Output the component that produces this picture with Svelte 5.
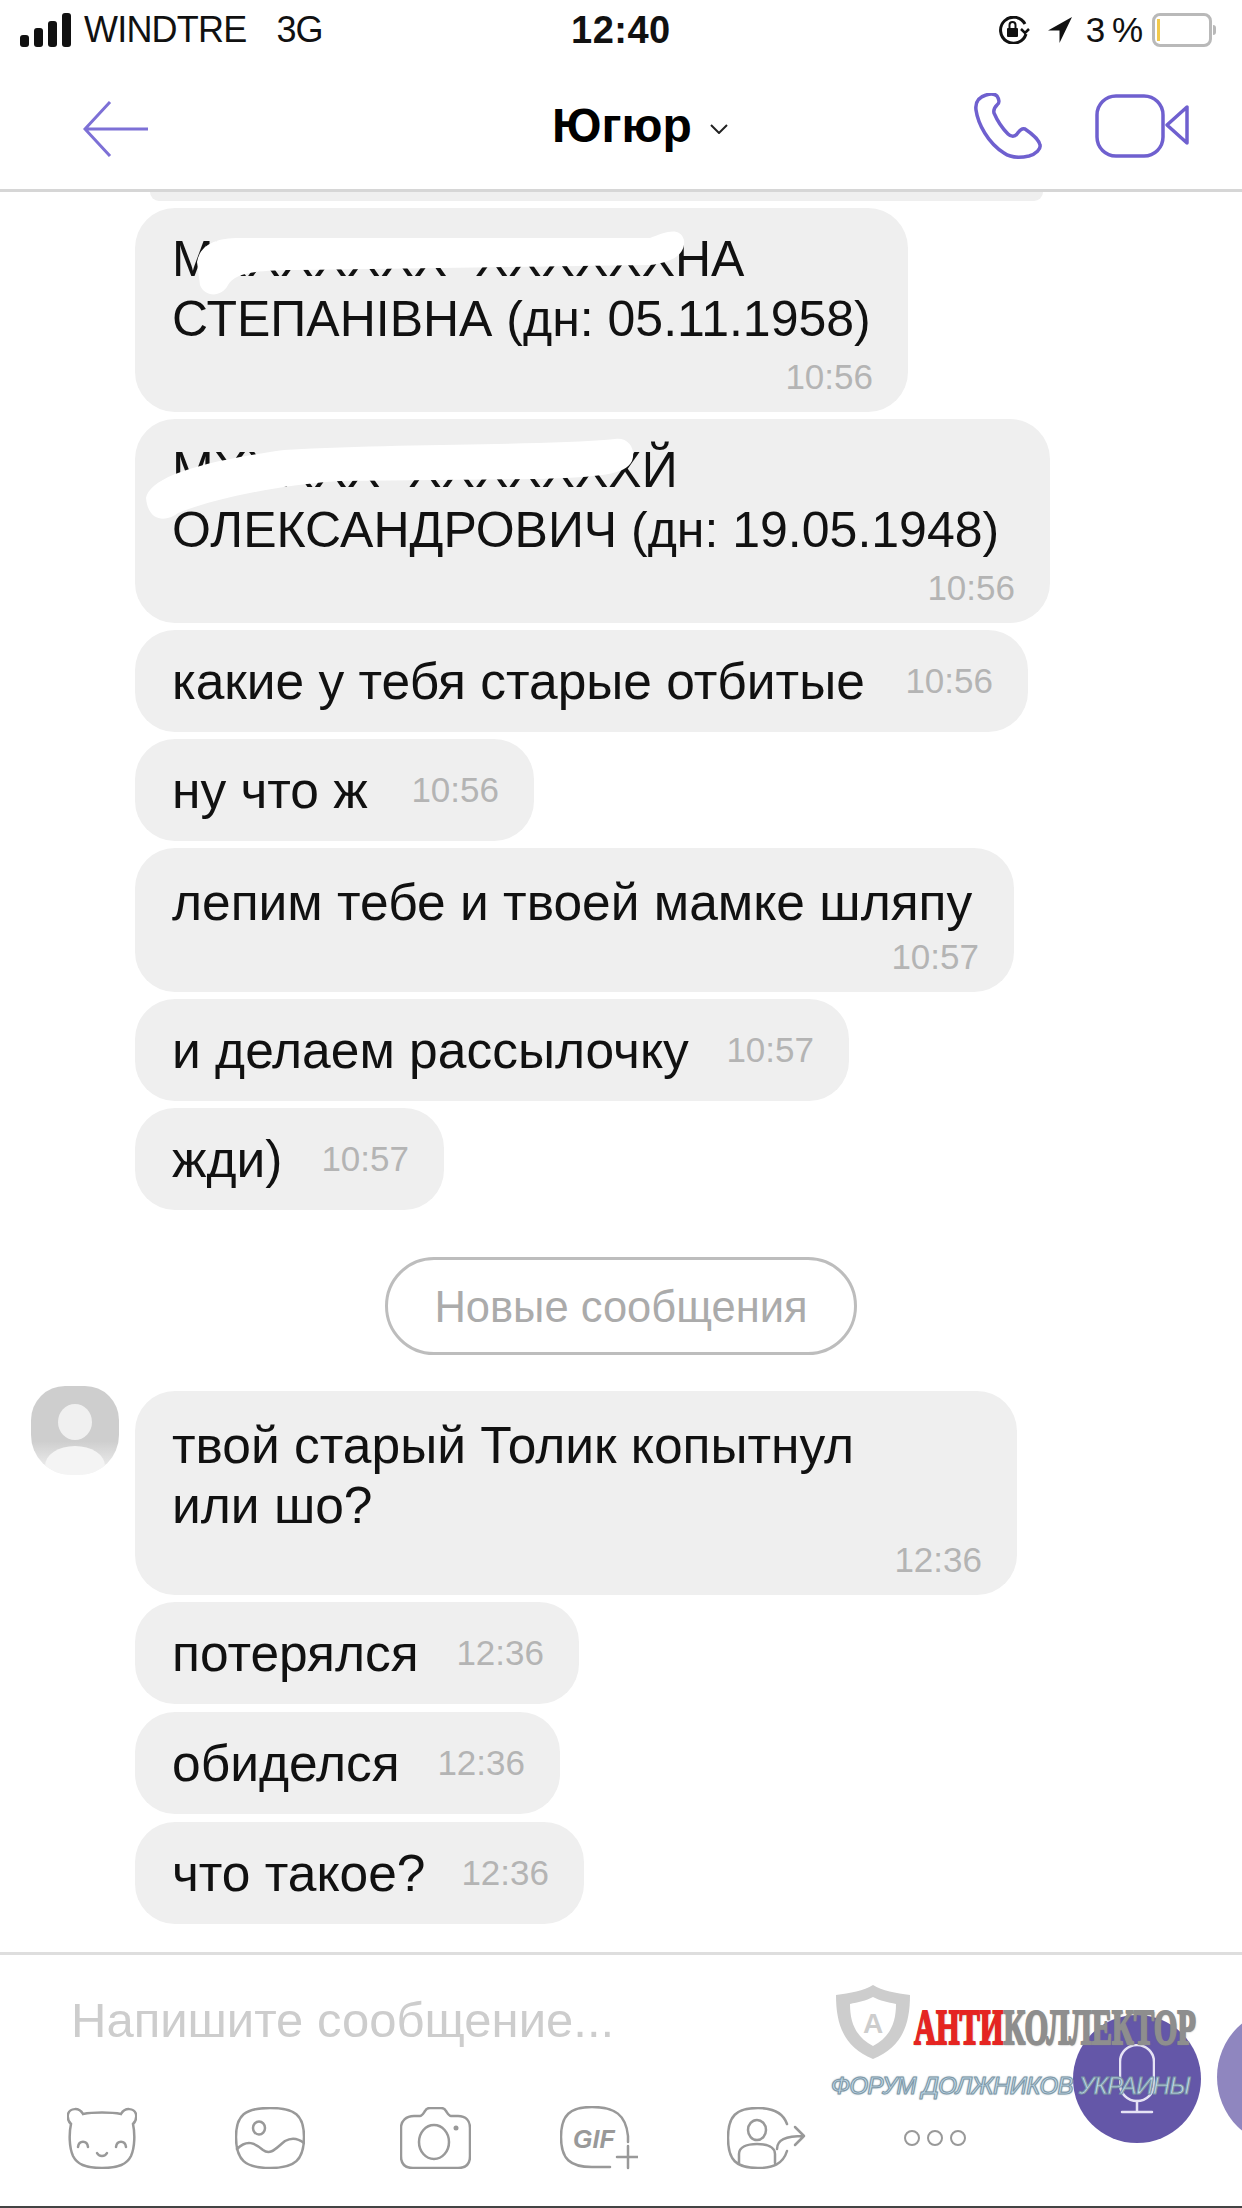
<script lang="ts">
	interface Message {
		lines: string[];
		time: string;
		width: number;
		caps?: boolean;
		mask?: { box: string; d: string };
	}

	// the hand-redacted letters stay placeholders under the white strokes
	const before: Message[] = [
		{
			lines: ['МХХХХХХХ\u00a0\u00a0ХХХХХХНА', 'СТЕПАНІВНА (дн: 05.11.1958)'],
			time: '10:56',
			width: 773,
			caps: true,
			mask: {
				box: '135 208 773 204',
				d: 'M197 262C200 245 215 238 240 238L650 238C665 232 680 226 684 240C686 255 670 263 650 265L300 270C260 270 235 272 228 285C222 297 205 298 200 285Z'
			}
		},
		{
			lines: ['МХХХХХ\u00a0\u00a0ХХХХХХХЙ', 'ОЛЕКСАНДРОВИЧ (дн: 19.05.1948)'],
			time: '10:56',
			width: 915,
			caps: true,
			mask: {
				box: '135 418 915 204',
				d: 'M146 497C150 478 190 462 284 449C400 442 540 445 615 438C630 436 636 450 632 460C625 474 600 476 540 478L340 480C280 484 215 497 178 512C165 522 148 520 146 497Z'
			}
		},
		{ lines: ['какие у тебя старые отбитые'], time: '10:56', width: 893 },
		{ lines: ['ну что ж'], time: '10:56', width: 399 },
		{ lines: ['лепим тебе и твоей мамке шляпу', ''], time: '10:57', width: 879 },
		{ lines: ['и делаем рассылочку'], time: '10:57', width: 714 },
		{ lines: ['жди)'], time: '10:57', width: 309 }
	];

	const after: Message[] = [
		{ lines: ['потерялся'], time: '12:36', width: 444 },
		{ lines: ['обиделся'], time: '12:36', width: 425 },
		{ lines: ['что такое?'], time: '12:36', width: 449 }
	];
</script>

{#snippet bubble(m: Message)}
	<div class="bubble" class:stacked={m.lines.length > 1} style="width: {m.width}px">
		{#if m.lines.length > 1}
			<div class="text" class:caps={m.caps}>
				{#each m.lines.filter((l) => l) as line}
					<div>{line}</div>
				{/each}
			</div>
			<div class="time-row"><span class="time">{m.time}</span></div>
		{:else}
			<span class="text">{m.lines[0]}</span>
			<span class="time">{m.time}</span>
		{/if}
		{#if m.mask}
			<svg class="mask" viewBox={m.mask.box}><path d={m.mask.d} fill="#fff" /></svg>
		{/if}
	</div>
{/snippet}

<div class="phone">
	<div class="status">
		<div class="status-left">
			<svg width="52" height="34" viewBox="0 0 52 34" fill="#111">
				<rect x="0" y="22" width="9" height="12" rx="3" />
				<rect x="14" y="15" width="9" height="19" rx="3" />
				<rect x="28" y="8" width="9" height="26" rx="3" />
				<rect x="42" y="0" width="9" height="34" rx="3" />
			</svg>
			<span class="carrier">WINDTRE</span>
			<span class="carrier net">3G</span>
		</div>
		<span class="clock">12:40</span>
		<div class="status-right">
			<svg width="34" height="28" viewBox="0 0 34 28" fill="none" stroke="#111" stroke-width="3">
				<path d="M29 8A13 13 0 1 0 30 18" />
				<path d="M25 13l4 4 4-4" stroke-width="2.5" />
				<rect x="11" y="12" width="11" height="9" rx="1" fill="#111" stroke="none" />
				<path d="M13.5 12V9a3 3 0 0 1 6 0v3" stroke-width="2" />
			</svg>
			<svg class="locate" width="24" height="26" viewBox="0 0 24 26" fill="#111">
				<path d="M24 0L0 13.5H11.5V26Z" />
			</svg>
			<span class="percent">3 %</span>
			<div class="battery"><div class="level"></div></div>
			<div class="nub"></div>
		</div>
	</div>

	<header class="topbar">
		<svg class="back" width="66" height="56" viewBox="0 0 66 56" fill="none" stroke="#7d70d6" stroke-width="3">
			<path d="M65 28H2M27 1L2 28L27 55" />
		</svg>
		<div class="title">
			<span>Югюр</span>
			<svg width="18" height="10" viewBox="0 0 18 10" fill="none" stroke="#222" stroke-width="2">
				<path d="M1 1l8 8 8-8" />
			</svg>
		</div>
		<div class="actions">
			<svg width="68" height="66" viewBox="0 0 68 66" fill="none" stroke="#6f60cf" stroke-width="3.5" stroke-linejoin="round">
				<path d="M12 2C5 4 1 9 2 17C4 31 14 50 30 60C37 65 46 65 55 63C62 61 67 56 66 52C65 47 57 40 51 36C48 35 46 37 43 41C41 44 37 44 34 41C28 35 23 27 20 20C19 16 21 14 23 12C26 10 25 6 23 3C20 0 15 1 12 2Z" />
			</svg>
			<svg width="94" height="64" viewBox="0 0 94 64" fill="none" stroke="#6f60cf" stroke-width="3.5" stroke-linejoin="round">
				<rect x="2" y="2" width="66" height="60" rx="19" />
				<path d="M92 13V49L72 31Z" />
			</svg>
		</div>
	</header>

	<main class="chat">
		<div class="cut"></div>
		<div class="group">
			{#each before as m}
				{@render bubble(m)}
			{/each}
		</div>

		<div class="divider"><span>Новые сообщения</span></div>

		<div class="first-row">
			<div class="avatar">
				<div class="head"></div>
				<div class="shoulders"></div>
			</div>
			{@render bubble({ lines: ['твой старый Толик копытнул', 'или шо?'], time: '12:36', width: 882 })}
		</div>
		<div class="group after">
			{#each after as m}
				{@render bubble(m)}
			{/each}
		</div>
	</main>

	<footer class="composer">
		<div class="placeholder">Напишите сообщение...</div>
		<div class="tools">
			<svg width="70" height="62" viewBox="0 0 70 62" fill="none" stroke="#999" stroke-width="2.5" stroke-linecap="round">
				<path d="M16 7C12 0 3 1 1 7C0 12 2 15 4 17C2 26 2 40 6 49C10 57 18 61 35 61C52 61 60 57 64 49C68 40 68 26 66 17C68 15 70 12 69 7C67 1 58 0 54 7C44 5 26 5 16 7Z" />
				<path d="M11 40C12 33 20 33 21 40M49 40C50 33 58 33 59 40M30 46C32 50 38 50 40 46" />
			</svg>
			<svg class="wide" width="70" height="62" viewBox="0 0 70 62" fill="none" stroke="#999" stroke-width="2.5" stroke-linecap="round">
				<path d="M1 30C1 8 10 1 35 1C60 1 69 8 69 30C69 53 60 61 35 61C10 61 1 53 1 30Z" />
				<ellipse cx="24" cy="21" rx="6" ry="6.5" />
				<path d="M2 42C12 32 20 36 28 43C36 49 42 40 50 34C57 30 64 32 69 36" />
			</svg>
			<svg class="mid" width="71" height="62" viewBox="0 0 71 62" fill="none" stroke="#999" stroke-width="2.5" stroke-linecap="round">
				<path d="M14 9H20C22 9 23 7 25 4C26 2 28 1 30 1H41C43 1 45 2 46 4C48 7 49 9 51 9H58C66 9 70 14 70 21V49C70 57 66 61 58 61H13C5 61 1 57 1 49V21C1 14 6 9 14 9Z" />
				<ellipse cx="34" cy="35" rx="15" ry="17" />
				<circle cx="56" cy="21" r="2.5" fill="#999" stroke="none" />
			</svg>
			<div class="gif">
				<svg width="78" height="64" viewBox="0 0 78 64" fill="none" stroke="#999" stroke-width="2.5" stroke-linecap="round">
					<path d="M50 61H32C10 61 1 53 1 31C1 9 10 1 32 1C55 1 66 9 68 30V36" />
					<path d="M68 40V62M57 51H78" />
				</svg>
				<span>GIF</span>
			</div>
			<svg width="79" height="62" viewBox="0 0 79 62" fill="none" stroke="#999" stroke-width="2.5" stroke-linecap="round" stroke-linejoin="round">
				<path d="M60 17C56 5 46 1 31 1C9 1 1 9 1 31C1 53 9 61 31 61C46 61 56 57 60 44" />
				<ellipse cx="30" cy="23" rx="9" ry="10" />
				<path d="M12 56V47C12 40 20 37 30 37C40 37 48 40 48 47V56" />
				<path d="M50 42C50 33 58 29 77 29M68 20L77 29L68 38" />
			</svg>
			<div class="dots wide"><i></i><i></i><i></i></div>
		</div>

		<div class="mic">
			<svg width="36" height="70" viewBox="0 0 36 70" fill="none" stroke="#e6e3f5" stroke-width="2.5" stroke-linecap="round">
				<rect x="1" y="1" width="34" height="56" rx="17" />
				<path d="M18 57V68M3 68H33" />
			</svg>
		</div>
		<div class="side-button"></div>

		<div class="stamp">
			<svg class="shield" width="74" height="74" viewBox="0 0 74 74">
				<path d="M37 0C46 6 60 8 74 10C74 40 66 62 37 74C8 62 0 40 0 10C14 8 28 6 37 0Z" fill="#cdcdcd" />
				<path d="M37 12C44 16 52 17 60 19C60 38 54 52 37 61C20 52 14 38 14 19C22 17 30 16 37 12Z" fill="#fff" />
			</svg>
			<span class="shield-letter">A</span>
			<div class="brand"><span class="red">АНТИ</span><span class="grey">КОЛЛЕКТОР</span></div>
			<div class="forum">ФОРУМ ДОЛЖНИКОВ УКРАИНЫ</div>
		</div>
	</footer>
	<div class="home-edge"></div>
</div>

<style>
	:global(body) {
		margin: 0;
		background: #fff;
	}

	.phone {
		width: 1242px;
		height: 2208px;
		overflow: hidden;
		display: flex;
		flex-direction: column;
		font-family: "Liberation Sans", Arial, sans-serif;
		color: #111;
		background: #fff;
		position: relative;
	}

	.status {
		height: 60px;
		flex: none;
		display: flex;
		align-items: center;
		justify-content: space-between;
		padding: 0 26px 0 20px;
		position: relative;
	}

	.status-left,
	.status-right {
		display: flex;
		align-items: center;
	}

	.carrier {
		font-size: 36px;
		margin-left: 12px;
		letter-spacing: -0.8px;
	}

	.carrier.net {
		margin-left: 30px;
	}

	.clock {
		position: absolute;
		left: 571px;
		font-size: 38px;
		font-weight: 700;
		letter-spacing: 0.5px;
	}

	.locate {
		margin-left: 18px;
	}

	.percent {
		font-size: 35px;
		margin-left: 14px;
		word-spacing: -3px;
	}

	.battery {
		width: 60px;
		height: 34px;
		margin-left: 9px;
		box-sizing: border-box;
		border: 3px solid #b9b9b9;
		border-radius: 8px;
		padding: 3px 2px;
	}

	.level {
		width: 3px;
		height: 100%;
		background: #f2c94c;
	}

	.nub {
		width: 3px;
		height: 10px;
		margin-left: 1px;
		background: #b9b9b9;
		border-radius: 0 3px 3px 0;
	}

	.topbar {
		height: 130px;
		flex: none;
		box-sizing: border-box;
		border-bottom: 3px solid #d6d6d6;
		display: flex;
		align-items: center;
		justify-content: space-between;
		padding: 0 53px 0 83px;
		position: relative;
		margin-top: 2px;
	}

	.back {
		margin-top: 6px;
	}

	.title {
		position: absolute;
		left: 552px;
		top: 36px;
		display: flex;
		align-items: center;
		gap: 18px;
		font-size: 48px;
		font-weight: 700;
		color: #000;
	}

	.title svg {
		margin-top: 6px;
	}

	.actions {
		display: flex;
		align-items: center;
		gap: 53px;
	}

	.chat {
		flex: 1;
		padding-left: 135px;
		min-height: 0;
	}

	.cut {
		width: 893px;
		height: 9px;
		margin-left: 15px;
		background: #efefef;
		border-radius: 0 0 30px 30px;
		margin-bottom: 7px;
	}

	.group {
		display: flex;
		flex-direction: column;
		align-items: flex-start;
		gap: 7px;
	}

	.group.after {
		margin-top: 7px;
		gap: 8px;
	}

	.bubble {
		box-sizing: border-box;
		position: relative;
		background: #efefef;
		border-radius: 40px;
		padding: 21px 35px 21px 37px;
		display: flex;
		justify-content: space-between;
		font-size: 51.5px;
		line-height: 60px;
		white-space: nowrap;
	}

	.bubble.stacked {
		display: block;
		padding-bottom: 0;
	}

	.stacked .text {
		position: relative;
		top: 3px;
	}

	.stacked .text.caps {
		top: 0;
		font-size: 50px;
	}

	.time {
		font-size: 35px;
		color: #b4b4b4;
	}

	.time-row {
		height: 63px;
		line-height: 44px;
		text-align: right;
	}

	.mask {
		position: absolute;
		inset: 0;
		width: 100%;
		height: 100%;
	}

	.divider {
		display: flex;
		justify-content: center;
		width: 472px;
		box-sizing: border-box;
		height: 98px;
		margin: 47px 0 36px 250px;
		border: 3px solid #bdbdbd;
		border-radius: 49px;
		align-items: center;
		font-size: 43.5px;
		color: #ababab;
	}

	.divider span {
		position: relative;
		top: 1px;
	}

	.first-row {
		display: flex;
		align-items: flex-start;
		gap: 16px;
		margin-left: -104px;
	}

	.avatar {
		width: 88px;
		height: 89px;
		margin-top: -5px;
		border-radius: 34px 34px 40px 40px;
		background: linear-gradient(#cecece 62%, #f4f4f4 100%);
		position: relative;
		overflow: hidden;
		flex: none;
	}

	.head {
		position: absolute;
		left: 27px;
		top: 18px;
		width: 34px;
		height: 36px;
		border-radius: 50%;
		background: #f0f0f0;
	}

	.shoulders {
		position: absolute;
		left: 14px;
		top: 60px;
		width: 60px;
		height: 40px;
		border-radius: 50% 50% 0 0;
		background: #f4f4f4;
	}

	.composer {
		height: 256px;
		flex: none;
		box-sizing: border-box;
		border-top: 3px solid #dedede;
		padding: 40px 0 0 71px;
		position: relative;
	}

	.placeholder {
		font-size: 49px;
		line-height: 50px;
		color: #cdcdcd;
	}

	.tools {
		display: flex;
		align-items: center;
		gap: 89px;
		margin: 61px 0 0 -4px;
	}

	.tools .wide {
		margin-left: 9px;
	}

	.tools .mid {
		margin-left: 6px;
	}

	.gif {
		position: relative;
	}

	.gif svg {
		display: block;
	}

	.gif span {
		position: absolute;
		left: 13px;
		top: 19px;
		font-size: 25px;
		font-weight: 700;
		font-style: italic;
		color: #999;
	}

	.dots {
		display: flex;
		gap: 7px;
	}

	.dots i {
		width: 16px;
		height: 16px;
		box-sizing: border-box;
		border: 2.5px solid #999;
		border-radius: 50%;
	}

	.mic {
		position: absolute;
		left: 1073px;
		top: 60px;
		width: 128px;
		height: 128px;
		border-radius: 50%;
		background: #6457a8;
		display: flex;
		align-items: center;
		justify-content: center;
	}

	.side-button {
		position: absolute;
		left: 1217px;
		top: 52px;
		width: 140px;
		height: 140px;
		border-radius: 50%;
		background: #8f86bf;
	}

	.stamp {
		position: absolute;
		left: 831px;
		top: 30px;
		width: 380px;
		height: 120px;
	}

	.shield {
		position: absolute;
		left: 5px;
		top: 0;
	}

	.shield-letter {
		position: absolute;
		left: 32px;
		top: 23px;
		font-size: 28px;
		font-weight: 700;
		color: #cdcdcd;
	}

	.brand {
		position: absolute;
		left: 83px;
		top: 17px;
		font-family: "Liberation Serif", serif;
		font-size: 50px;
		line-height: 50px;
		font-weight: 700;
		white-space: nowrap;
		transform: scaleX(0.606);
		transform-origin: left;
		text-shadow: 1px 1px 2px #777;
		-webkit-text-stroke: 2px currentColor;
	}

	.red {
		color: #e52421;
	}

	.grey {
		color: #8e8e8e;
	}

	.forum {
		position: absolute;
		left: 0;
		top: 86px;
		font-size: 24px;
		line-height: 30px;
		font-style: italic;
		white-space: nowrap;
		color: #c4dcec;
		letter-spacing: -0.6px;
		-webkit-text-stroke: 1px #7d98a8;
		text-shadow: 0 0 2px #5d7584;
	}

	.home-edge {
		position: absolute;
		left: 0;
		top: 2206px;
		width: 1242px;
		height: 2px;
		background: #444;
	}
</style>
